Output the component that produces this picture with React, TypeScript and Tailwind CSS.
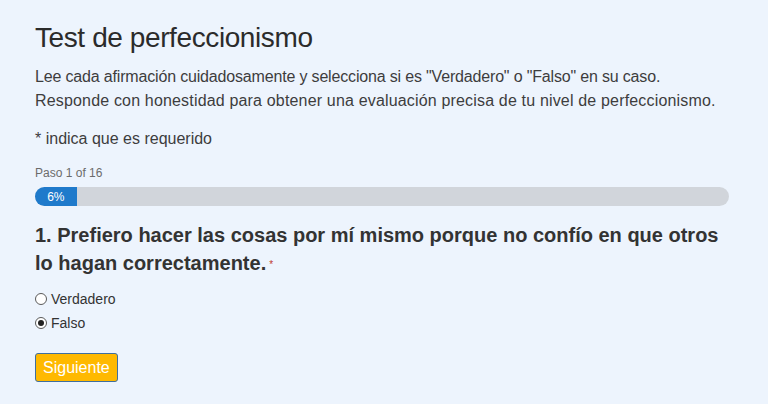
import React, { useState } from 'react';

const options = ['Verdadero', 'Falso'];

export default function App() {
  const [answer, setAnswer] = useState('Falso');
  const step = 1;
  const total = 16;
  const pct = Math.round((step / total) * 100);

  return (
    <div className="min-h-[404px] w-full bg-[#edf4fd] pl-[35px] pr-[39px] pt-[21px] pb-5 font-['Liberation_Sans',Arial,sans-serif] text-[#333]">
      {/* Header */}
      <h1 className="text-[28px] leading-[34px] font-normal tracking-[-0.4px] text-[#2b2b2b]">Test de perfeccionismo</h1>
      <p className="mt-[10px] text-[16px] leading-[24px] text-[#3d3d3d]">
        <span className="tracking-[-0.17px]">
          Lee cada afirmación cuidadosamente y selecciona si es "Verdadero" o "Falso" en su caso.
        </span>
        <br />
        <span className="tracking-[0.17px]">
          Responde con honestidad para obtener una evaluación precisa de tu nivel de perfeccionismo.
        </span>
      </p>
      <p className="mt-[14px] text-[16px] leading-[24px] text-[#3d3d3d]">* indica que es requerido</p>

      {/* Progress */}
      <div className="mt-[14px] text-[12px] leading-[16px] text-[#6b6b6b]">
        Paso {step} of {total}
      </div>
      <div className="mt-[6px] flex h-[19px] w-full overflow-hidden rounded-full bg-[#d1d5db]">
        <div
          className="flex items-center justify-center bg-[#1f7acb] text-[12px] text-white"
          style={{ width: `${pct}%` }}
        >
          {pct}%
        </div>
      </div>

      {/* Question */}
      <h2 className="mt-[15px] text-[20px] leading-[28px] font-bold text-[#333]">
        1. Prefiero hacer las cosas por mí mismo porque no confío en que otros lo hagan correctamente.
        <span className="ml-[3px] align-[2px] text-[10px] font-normal text-[#c0392b]">*</span>
      </h2>

      <div className="mt-[8px] flex flex-col">
        {options.map((opt) => (
          <label
            key={opt}
            className="flex h-[24px] cursor-pointer items-center gap-[4px] text-[14px] leading-[24px] text-[#333]"
            onClick={() => setAnswer(opt)}
          >
            <span className="flex h-[12px] w-[12px] items-center justify-center rounded-full border border-[#5a5a5a] bg-white">
              {answer === opt && <span className="h-[6px] w-[6px] rounded-full bg-[#222]" />}
            </span>
            {opt}
          </label>
        ))}
      </div>

      <button className="mt-[18px] h-[29px] rounded-[3px] border border-[#3f6f9f] bg-[#ffb900] px-[7px] text-[16px] leading-[27px] text-white">
        Siguiente
      </button>
    </div>
  );
}
